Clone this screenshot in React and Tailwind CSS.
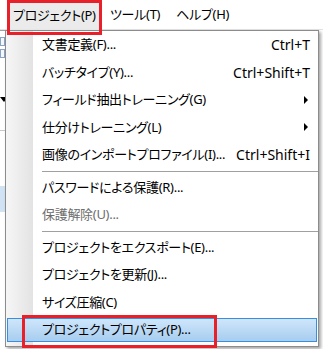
import React from "react";

const font = {
	fontFamily: '"Noto Sans", "Noto Sans CJK JP", sans-serif',
};

const items = [
	{ label: "文書定義(F)...", shortcut: "Ctrl+T" },
	{ label: "バッチタイプ(Y)...", shortcut: "Ctrl+Shift+T" },
	{ label: "フィールド抽出トレーニング(G)", submenu: true },
	{ label: "仕分けトレーニング(L)", submenu: true },
	{ label: "画像のインポートプロファイル(I)...", shortcut: "Ctrl+Shift+I" },
	{ separator: true },
	{ label: "パスワードによる保護(R)..." },
	{ label: "保護解除(U)...", disabled: true },
	{ separator: true },
	{ label: "プロジェクトをエクスポート(E)..." },
	{ label: "プロジェクトを更新(J)..." },
	{ label: "サイズ圧縮(C)" },
	{ label: "プロジェクトプロパティ(P)...", active: true },
];

function MenuRow({ item }) {
	if (item.separator)
		return (
			<div className="h-[5px] flex items-center pl-[36px]">
				<div className="h-px w-full bg-[#a0a0a0]" />
			</div>
		);

	if (item.active)
		return (
			<div className="h-[27.5px] px-px py-[1.5px]">
				<div className="h-full flex items-center pl-[34px] border border-[#3a8ee0] bg-gradient-to-b from-[#cfe6fb] to-[#a7cdef]">
					<span>{item.label}</span>
				</div>
			</div>
		);

	return (
		<div
			className={`h-[27.5px] flex items-center justify-between pl-[36px] pr-[8px] ${
				item.disabled ? "text-[#6d6d6d]" : "text-black"
			}`}
		>
			<span>{item.label}</span>
			{item.shortcut && (
				<span className="text-[14px] tracking-normal">{item.shortcut}</span>
			)}
			{item.submenu && (
				<span className="mr-[2px] w-0 h-0 border-y-[4px] border-y-transparent border-l-[4px] border-l-black" />
			)}
		</div>
	);
}

export default function App() {
	return (
		<div
			className="relative w-[323px] h-[349px] overflow-hidden bg-white text-[13px] tracking-[-0.3px] text-black whitespace-nowrap [font-feature-settings:'palt']"
			style={font}
		>
			{/* menu bar */}
			<div className="h-[30px] flex items-center bg-white border-b border-[#e3e3e3]">
				<div className="ml-[10px] h-[27px] mt-[3px] w-[90px] flex items-center pl-[3px] bg-[#ebebeb]">
					プロジェクト(P)
				</div>
				<div className="ml-[10px]">ツール(T)</div>
				<div className="ml-[16px]">ヘルプ(H)</div>
			</div>

			{/* window behind the menu */}
			<div className="w-[6px] flex flex-col">
				<div className="h-px bg-[#a0a0a0]" />
				<div className="mt-[6px] h-[9px] w-[5px] border border-[#8aa4c8] bg-[#f4f7fb]" />
				<div className="mt-[3px] h-[9px] w-[5px] border border-[#8aa4c8] bg-[#f4f7fb]" />
				<div className="mt-[39px] w-0 h-0 border-x-[4px] border-x-transparent border-t-[5px] border-t-black" />
				<div className="mt-[28px] h-px bg-[#c8c8c8]" />
				<div className="mt-[55px] h-[26px] bg-[#cfe3f5]" />
			</div>

			{/* dropdown */}
			<div className="absolute left-[5px] top-[30px] w-[314px] h-[317px] border border-[#8c8c8c] shadow-[2px_2px_3px_rgba(0,0,0,0.35)] bg-[linear-gradient(to_right,#f6f6f6_0px,#e3e3e3_27px,#ffffff_27px)]">
				{items.map((item, i) => (
					<MenuRow key={i} item={item} />
				))}
			</div>

			{/* red annotations */}
			<div className="absolute left-[7px] top-0 w-[95px] h-[35px] border-[3px] border-[#e8202a]" />
			<div className="absolute left-[22px] top-[315px] w-[195px] h-[33px] border-[3px] border-[#e8202a]" />
		</div>
	);
}
